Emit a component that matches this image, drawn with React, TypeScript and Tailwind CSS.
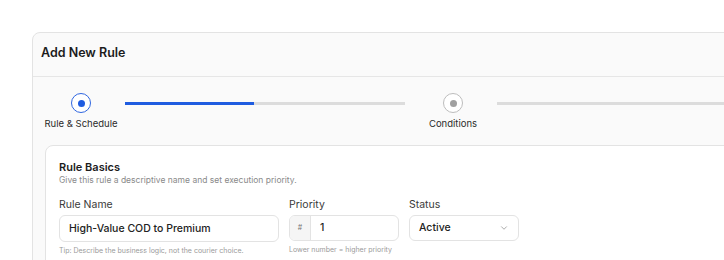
import { ChevronDown } from 'lucide-react';

export default function App() {
  return (
    <div className="w-[724px] h-[260px] overflow-hidden bg-white pl-8 pt-8 font-['Inter',sans-serif]">
      <div className="w-[900px] rounded-lg border border-[#e3e3e3] bg-[#fafafa]">
        {/* Header */}
        <div className="flex h-[44px] items-center border-b border-[#e6e6e6] px-2 pb-[2px]">
          <h2 className="text-[12.5px] font-semibold text-[#1c1c1c]">Add New Rule</h2>
        </div>

        {/* Stepper */}
        <div className="flex items-start px-3 pt-[16px]">
          <div className="flex w-[72px] flex-col items-center">
            <div className="flex h-5 w-5 items-center justify-center rounded-full border border-[#2f66e0] bg-white">
              <div className="h-[7px] w-[7px] rounded-full bg-[#1f5ce0]" />
            </div>
            <span className="mt-[3px] whitespace-nowrap text-[9.5px] leading-[15px] text-[#2a2a2a]">Rule &amp; Schedule</span>
          </div>
          <div className="ml-2 mr-3 mt-[9px] h-[3px] w-[280px] bg-[#dcdcdc]">
            <div className="h-full w-[129px] bg-[#1f5ce0]" />
          </div>
          <div className="flex w-[72px] flex-col items-center">
            <div className="flex h-5 w-5 items-center justify-center rounded-full border border-[#bdbdbd] bg-white">
              <div className="h-[7px] w-[7px] rounded-full bg-[#a0a0a0]" />
            </div>
            <span className="mt-[3px] whitespace-nowrap text-[9.5px] leading-[15px] text-[#2a2a2a]">Conditions</span>
          </div>
          <div className="ml-2 mt-[9px] h-[3px] flex-1 bg-[#dcdcdc]" />
        </div>

        {/* Rule Basics card */}
        <div className="mx-3 mt-[14px] rounded-lg border border-[#e3e3e3] bg-white px-[13px] pt-[14px] pb-6">
          <h3 className="text-[11px] leading-[14px] font-semibold text-[#1c1c1c]">Rule Basics</h3>
          <p className="text-[8.5px] leading-[12px] text-[#8a8a8a]">
            Give this rule a descriptive name and set execution priority.
          </p>

          <div className="mt-[12px] flex gap-[10px]">
            <div className="w-[220px]">
              <label className="block text-[10.5px] leading-[14px] text-[#3a3a3a]">Rule Name</label>
              <div className="mt-[3px] flex h-[27px] items-center rounded-md border border-[#e3e3e3] px-[9px] text-[10.5px] font-medium text-[#222]">
                High-Value COD to Premium
              </div>
              <p className="mt-[4px] whitespace-nowrap text-[7px] leading-[10px] text-[#9a9a9a]">
                Tip: Describe the business logic, not the courier choice.
              </p>
            </div>

            <div className="w-[110px]">
              <label className="block text-[10.5px] leading-[14px] text-[#3a3a3a]">Priority</label>
              <div className="mt-[3px] flex h-[26px] overflow-hidden rounded-md border border-[#e3e3e3]">
                <div className="flex w-[21px] items-center justify-center border-r border-[#e3e3e3] bg-[#f5f5f5] text-[7px] text-[#777]">
                  #
                </div>
                <div className="flex items-center px-[9px] text-[10.5px] font-medium text-[#222]">1</div>
              </div>
              <p className="mt-[4px] whitespace-nowrap text-[7px] leading-[10px] text-[#9a9a9a]">Lower number = higher priority</p>
            </div>

            <div className="w-[110px]">
              <label className="block text-[10.5px] leading-[14px] text-[#3a3a3a]">Status</label>
              <div className="mt-[3px] flex h-[26px] items-center justify-between rounded-md border border-[#e3e3e3] px-[9px] text-[10.5px] font-medium text-[#222]">
                <span>Active</span>
                <ChevronDown size={10} className="text-[#9a9a9a]" />
              </div>
            </div>
          </div>
        </div>
      </div>
    </div>
  );
}
